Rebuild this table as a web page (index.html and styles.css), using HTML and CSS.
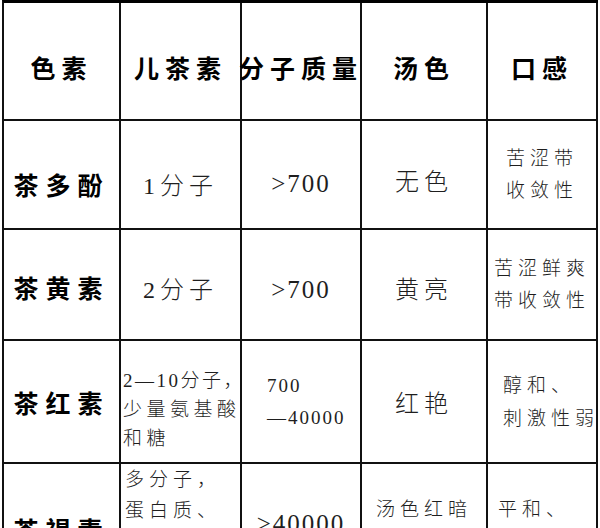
FILE: index.html
```html
<!DOCTYPE html>
<html lang="zh">
<head>
<meta charset="utf-8">
<title>茶色素</title>
<link rel="stylesheet" href="styles.css">
</head>
<body>
<div class="table">
  <div class="cell head">色素</div>
  <div class="cell head">儿茶素</div>
  <div class="cell head">分子质量</div>
  <div class="cell head">汤色</div>
  <div class="cell head">口感</div>

  <div class="cell name r1">茶多酚</div>
  <div class="cell big r1">1分子</div>
  <div class="cell num r1">&gt;700</div>
  <div class="cell big r1c4">无色</div>
  <div class="cell small"><div>苦涩带<br>收敛性</div></div>

  <div class="cell name r2">茶黄素</div>
  <div class="cell big r2">2分子</div>
  <div class="cell num r2n">&gt;700</div>
  <div class="cell big r2">黄亮</div>
  <div class="cell small"><div>苦涩鲜爽<br>带收敛性</div></div>

  <div class="cell name">茶红素</div>
  <div class="cell small left r3c2"><div><span class="tight">2—10分子，</span><br>少量氨基酸<br>和糖</div></div>
  <div class="cell small left r3c3"><div>700<br>—40000</div></div>
  <div class="cell big">红艳</div>
  <div class="cell small left r3c5"><div>醇和、<br>刺激性弱</div></div>

  <div class="cell name top r4c1">茶褐素</div>
  <div class="cell small left top r4c2"><div>多分子，<br>蛋白质、<br>氨基酸、<br>糖类等</div></div>
  <div class="cell num top r4c3">&gt;40000</div>
  <div class="cell small top r4c4"><div>汤色红暗<br>无光泽</div></div>
  <div class="cell small left top r4c5"><div>平和、<br>无刺激性</div></div>
</div>
</body>
</html>
```

FILE: styles.css
```css
html, body {
  margin: 0;
  padding: 0;
  background: #ffffff;
  overflow: hidden;
}

body {
  width: 600px;
  height: 528px;
  font-family: "Liberation Serif", "Noto Sans CJK SC", serif;
  color: #1e1e1e;
}

.table {
  margin-left: 2px;
  width: 596px;
  display: grid;
  grid-template-columns: 117px 121px 120px 126px 110px;
  grid-template-rows: 118px 109px 111px 123px 136px;
  border-left: 2px solid #111;
  border-top: 3px solid #000;
  box-sizing: border-box;
}

.cell {
  box-sizing: border-box;
  border-right: 2px solid #111;
  border-bottom: 2px solid #111;
  display: flex;
  align-items: center;
  justify-content: center;
  text-align: center;
  white-space: nowrap;
  min-width: 0;
}

.head {
  font-family: "Noto Sans CJK SC", sans-serif;
  font-weight: 700;
  font-size: 25px;
  letter-spacing: 6px;
  color: #000;
  padding-top: 12px;
}

.name {
  font-family: "Noto Sans CJK SC", sans-serif;
  font-weight: 700;
  font-size: 25px;
  letter-spacing: 7px;
  color: #000;
}

.big {
  font-weight: 300;
  font-size: 24px;
  letter-spacing: 5px;
}

.num {
  font-size: 25px;
  letter-spacing: 2px;
}

.small {
  font-weight: 300;
  font-size: 19px;
  letter-spacing: 5px;
  line-height: 32px;
}

.left {
  justify-content: flex-start;
  text-align: left;
}

.top {
  align-items: flex-start;
}

.tight {
  letter-spacing: 2.5px;
}

.r1 { padding-top: 18px; }
.r1c4 { padding-top: 9px; }
.r2 { padding-top: 5px; }
.r2n { padding-top: 10px; }

.r3c2 { padding-left: 2px; padding-top: 16px; line-height: 29px; letter-spacing: 4.5px; }
.r3c3 { padding-left: 25px; letter-spacing: 2px; }
.r3c5 { padding-left: 15px; line-height: 33px; }

.r4c1 { padding-top: 50px; line-height: 30px; }
.r4c2 { padding-left: 4px; line-height: 31px; }
.r4c3 { padding-top: 45px; line-height: 30px; }
.r4c4 { padding-top: 30px; }
.r4c5 { padding-left: 10px; padding-top: 30px; }
```
